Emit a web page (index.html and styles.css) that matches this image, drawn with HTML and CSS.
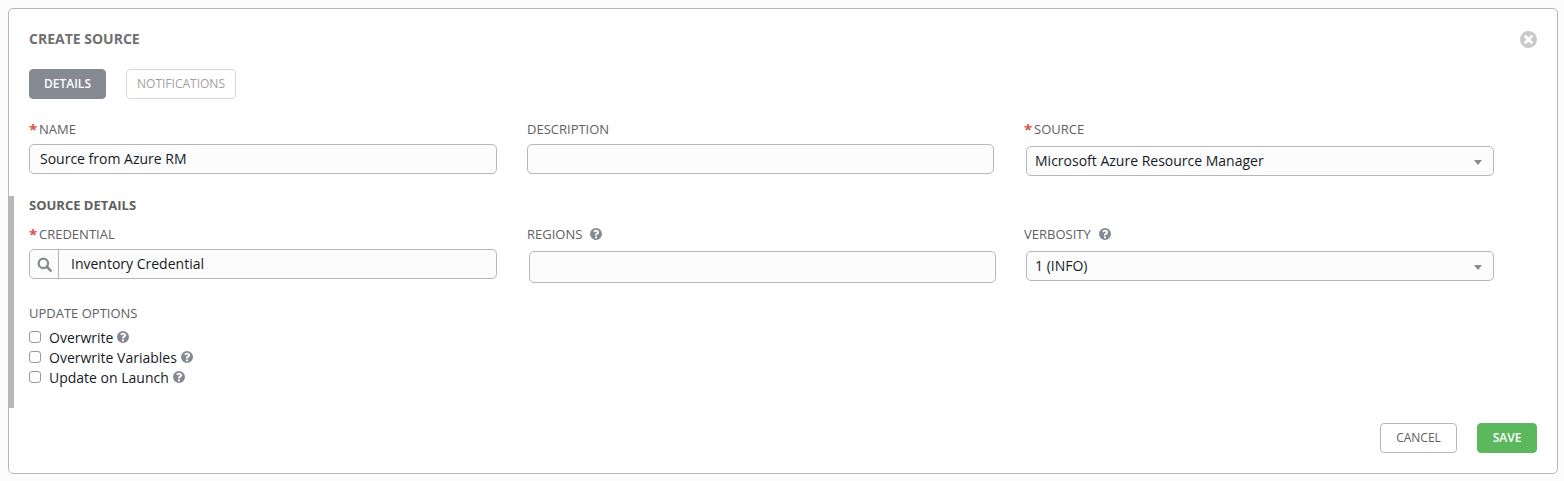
FILE: index.html
```html
<!DOCTYPE html>
<html lang="en">
<head>
<meta charset="utf-8">
<title>Create Source</title>
<link rel="stylesheet" href="styles.css">
</head>
<body>
<svg class="defs" width="0" height="0" aria-hidden="true">
  <symbol id="help" viewBox="0 0 24 24">
    <path fill-rule="evenodd" d="M12 0a12 12 0 1 0 0 24a12 12 0 0 0 0-24zM10 17h4v3.5h-4zM12.2 3.6c3.4 0 5.9 1.900 5.900 4.800c0 2.100-1.100 3.200-2.600 4.100c-1.100.7-1.500 1.100-1.500 2.300v.4h-4v-.8c0-2.100.8-3.100 2.300-4c1.100-.7 1.700-1.100 1.700-1.900c0-.8-.7-1.300-1.700-1.300c-1.100 0-2.100.6-3 1.700L6.600 6.500c1.400-1.800 3.200-2.900 5.600-2.900z"/>
  </symbol>
</svg>
<main class="panel">
  <header class="panel-head">
    <h1 class="title">CREATE SOURCE</h1>
    <svg class="close" viewBox="0 0 24 24" aria-label="Close"><path fill-rule="evenodd" d="M12 0a12 12 0 1 0 0 24a12 12 0 0 0 0-24zM7.900 5.200L12 9.300l4.100-4.100l2.700 2.700L14.700 12l4.100 4.100l-2.700 2.700L12 14.700l-4.100 4.100l-2.700-2.700L9.300 12L5.200 7.900z"/></svg>
  </header>
  <nav class="tabs">
    <button class="tab tab-active">DETAILS</button>
    <button class="tab tab-idle">NOTIFICATIONS</button>
  </nav>
  <section class="grid grid-top">
    <div class="field">
      <label class="label"><span class="req">*</span>NAME</label>
      <input class="control w468" value="Source from Azure RM">
    </div>
    <div class="field">
      <label class="label">DESCRIPTION</label>
      <input class="control w467">
    </div>
    <div class="field">
      <label class="label"><span class="req">*</span>SOURCE</label>
      <div class="select">Microsoft Azure Resource Manager</div>
    </div>
  </section>
  <section class="details">
    <h2 class="subtitle">SOURCE DETAILS</h2>
    <div class="grid grid-details">
      <div class="field">
        <label class="label"><span class="req">*</span>CREDENTIAL</label>
        <div class="lookup">
          <span class="lookup-btn">
            <svg class="search" viewBox="0 0 16 16"><circle cx="6.800" cy="6.800" r="5" fill="none" stroke="currentColor" stroke-width="2.400"/><path d="M10.400 10.400L14.500 14.500" stroke="currentColor" stroke-width="2.800" stroke-linecap="round"/></svg>
          </span>
          <span class="lookup-value">Inventory Credential</span>
        </div>
      </div>
      <div class="field">
        <label class="label">REGIONS<svg class="help"><use href="#help"/></svg></label>
        <input class="control regions">
      </div>
      <div class="field">
        <label class="label">VERBOSITY<svg class="help"><use href="#help"/></svg></label>
        <div class="select">1 (INFO)</div>
      </div>
    </div>
    <div class="options">
      <div class="options-title">UPDATE OPTIONS</div>
      <label class="check"><input type="checkbox"><span>Overwrite</span><svg class="help help-sm"><use href="#help"/></svg></label>
      <label class="check"><input type="checkbox"><span>Overwrite Variables</span><svg class="help help-sm"><use href="#help"/></svg></label>
      <label class="check"><input type="checkbox"><span>Update on Launch</span><svg class="help help-sm"><use href="#help"/></svg></label>
    </div>
  </section>
  <footer class="actions">
    <button class="btn btn-cancel">CANCEL</button>
    <button class="btn btn-save">SAVE</button>
  </footer>
</main>
</body>
</html>
```
FILE: styles.css
```css
* { box-sizing: border-box; }
html, body { height: 100%; }
body {
  margin: 0;
  padding: 8px 6px 7px 8px;
  background: #fcfcfc;
  font-family: "Open Sans", sans-serif;
  color: #161b1f;
}
.defs { position: absolute; }
.panel {
  height: 466px;
  width: 1550px;
  background: #fff;
  border: 1px solid #b7b7b7;
  border-radius: 5px;
  padding: 20px;
  display: flex;
  flex-direction: column;
}
.panel-head {
  display: flex;
  justify-content: space-between;
  align-items: center;
  height: 20px;
}
.title {
  margin: 0;
  font-size: 14px;
  line-height: 20px;
  font-weight: 700;
  color: #707070;
}
.close { width: 17px; height: 17px; fill: #c9c9c9; }
.tabs { display: flex; gap: 20px; margin-top: 20px; }
.tab {
  height: 30px;
  border-radius: 4px;
  font-family: inherit;
  font-size: 12px;
  padding: 0 0 2px;
}
.tab-active { width: 77px; background: #848992; border: 1px solid #848992; color: #fff; font-weight: 600; }
.tab-idle { width: 110px; background: #fff; border: 1px solid #d7d7d7; color: #a1a1a1; }
.grid { display: grid; grid-template-columns: 498px 497px 470px; }
.grid-top { margin-top: 20px; height: 77px; }
.field { display: flex; flex-direction: column; align-items: flex-start; }
.label {
  display: flex;
  align-items: center;
  height: 20px;
  font-size: 13px;
  color: #606060;
  margin-bottom: 5px;
}
.req {
  color: #d9534f;
  font-size: 15px;
  font-weight: 700;
  line-height: 20px;
  width: 10px;
}
.control, .select, .lookup {
  height: 30px;
  background: #fcfcfc;
  border: 1px solid #b7b7b7;
  border-radius: 5px;
  font-family: inherit;
  font-size: 14px;
  color: #161b1f;
}
.control { padding: 0 10px 2px; }
.w468 { width: 468px; }
.w467 { width: 467px; }
.regions { width: 467px; height: 32px; margin: 2px 0 0 2px; }
.select {
  position: relative;
  width: 468px;
  margin: 2px 0 0 2px;
  padding: 0 8px;
  line-height: 28px;
}
.select::after {
  content: "";
  position: absolute;
  right: 11px;
  top: 13px;
  border-left: 4px solid transparent;
  border-right: 4px solid transparent;
  border-top: 5px solid #848992;
}
.details {
  margin: 0 0 0 -21px;
  border-left: 6px solid #b7b7b7;
  padding-left: 15px;
  height: 212px;
}
.subtitle {
  margin: 0;
  font-size: 13px;
  line-height: 18px;
  font-weight: 700;
  color: #606060;
}
.grid-details { margin-top: 10px; }
.lookup { display: flex; align-items: center; width: 468px; }
.lookup-btn {
  width: 29px;
  height: 28px;
  border-right: 1px solid #b7b7b7;
  display: flex;
  align-items: center;
  justify-content: center;
  color: #848992;
}
.search { width: 15px; height: 15px; }
.lookup-value { padding: 0 0 1px 12px; }
.help { width: 12px; height: 12px; fill: #848992; margin-left: 8px; }
.help-sm { margin-left: 4px; }
.options { margin-top: 20px; }
.options-title { font-size: 13px; line-height: 20px; color: #606060; margin-bottom: 4px; }
.check { display: flex; align-items: center; height: 20px; font-size: 14px; }
.check input {
  appearance: none;
  width: 12px;
  height: 12px;
  margin: 0 8px 0 0;
  background: #fff;
  border: 1px solid #9a9a9a;
  border-radius: 3px;
}
.actions { display: flex; justify-content: flex-end; gap: 20px; margin-top: auto; }
.btn {
  height: 30px;
  border-radius: 4px;
  font-family: inherit;
  font-size: 12px;
  padding: 0 0 2px;
}
.btn-cancel { width: 77px; background: #fff; border: 1px solid #b7b7b7; color: #606060; }
.btn-save { width: 60px; background: #5cb85c; border: 1px solid #5cb85c; color: #fff; font-weight: 600; }
```
